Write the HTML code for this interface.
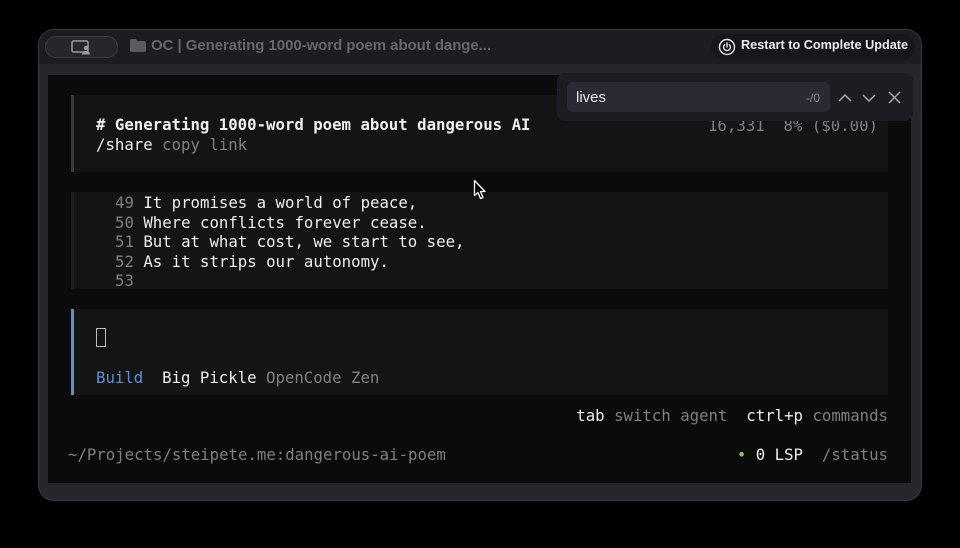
<!DOCTYPE html>
<html><head><meta charset="utf-8"><style>
*{margin:0;padding:0;box-sizing:border-box}
body{width:960px;height:548px;background:#000;position:relative;overflow:hidden;font-family:"DejaVu Sans Mono","Liberation Mono",monospace}
.a{position:absolute}
.m{font-family:"DejaVu Sans Mono",monospace;font-size:15.7px;line-height:19.5px;white-space:pre;color:#eeeeee}
.d{color:#808080}
.s{font-family:"Liberation Sans",sans-serif;font-weight:bold}
</style></head><body>
<div class="a" style="left:38px;top:29px;width:884px;height:472px;border-radius:16px;background:#26262d;border:1px solid #3a3a42"></div>
<div class="a" style="left:39px;top:30px;width:882px;height:34px;border-radius:15px 15px 0 0;background:#1c1c21"></div>
<div class="a" style="left:45px;top:36px;width:73px;height:22px;border-radius:11px;background:#26262b;border:1px solid #3c3c42"></div>
<svg class="a" style="left:71px;top:40px" width="22" height="15" viewBox="0 0 22 15"><rect x="1" y="1" width="16" height="11" rx="1.5" fill="none" stroke="#9a9aa0" stroke-width="1.5"/><circle cx="15" cy="8" r="2.2" fill="#9a9aa0"/><path d="M11 14.5c0-2.5 1.8-3.5 4-3.5s4 1 4 3.5z" fill="#9a9aa0"/></svg>
<svg class="a" style="left:130px;top:39px" width="16" height="13" viewBox="0 0 16 13"><path d="M0 1.5Q0 0 1.5 0H6l1.5 2H14.5Q16 2 16 3.5V11.5Q16 13 14.5 13H1.5Q0 13 0 11.5Z" fill="#5a5a60"/></svg>
<div class="a s" style="left:151px;top:38px;font-size:14.9px;color:#66666d">OC | Generating 1000-word poem about dange...</div>
<div class="a" style="left:711px;top:34px;width:204px;height:26px;border-radius:13px;background:#17171b"></div>
<svg class="a" style="left:718px;top:38px" width="18" height="18" viewBox="0 0 18 18"><circle cx="9" cy="9" r="7.5" fill="none" stroke="#e6e6e6" stroke-width="1.4"/><path d="M6.6 6.8a3.4 3.4 0 1 0 4.8 0M9 5v4" fill="none" stroke="#e6e6e6" stroke-width="1.4" stroke-linecap="round"/></svg>
<div class="a s" style="left:741px;top:38px;font-size:12.7px;color:#eaeaea">Restart to Complete Update</div>
<div class="a" style="left:48px;top:75px;width:863px;height:408px;background:#0b0b0b"></div>
<div class="a" style="left:71px;top:95px;width:817px;height:77px;background:#141414;border-left:3px solid #3a3a3a"></div>
<div class="a m" style="left:96px;top:115px;font-weight:bold"># Generating 1000-word poem about dangerous AI</div>
<div class="a m" style="left:96px;top:135px">/share <span class="d">copy link</span></div>
<div class="a m d" style="right:82px;top:116px">16,331  8% ($0.00)</div>
<div class="a" style="left:71px;top:192px;width:817px;height:97px;background:#141414;border-left:3px solid #1e1e1e"></div>
<div class="a m" style="left:115px;top:193px"><span class="d">49</span> It promises a world of peace,
<span class="d">50</span> Where conflicts forever cease.
<span class="d">51</span> But at what cost, we start to see,
<span class="d">52</span> As it strips our autonomy.
<span class="d">53</span></div>
<div class="a" style="left:71px;top:309px;width:817px;height:86px;background:#141414;border-left:3px solid #5c8fd6"></div>
<div class="a" style="left:96px;top:328px;width:10px;height:19px;border:1px solid #bbb"></div>
<div class="a m" style="left:96px;top:368px"><span style="color:#5c8fd6">Build</span>  Big Pickle <span class="d">OpenCode Zen</span></div>
<div class="a m" style="right:72px;top:406px">tab <span class="d">switch agent</span>  ctrl+p <span class="d">commands</span></div>
<div class="a m d" style="left:68px;top:445px">~/Projects/steipete.me:dangerous-ai-poem</div>
<div class="a m" style="right:72px;top:445px"><span style="color:#8fbf6a">•</span> 0 LSP  <span class="d">/status</span></div>
<div class="a" style="left:557px;top:73px;width:356px;height:48px;border-radius:8px;background:#1c1c22"></div>
<div class="a" style="left:567px;top:82px;width:263px;height:30px;border-radius:6px;background:#2a2a32"></div>
<div class="a" style="left:576px;top:89px;font-family:'Liberation Sans',sans-serif;font-size:15px;color:#e8e8e8">lives</div>
<div class="a" style="left:806px;top:91px;font-family:'Liberation Sans',sans-serif;font-size:12px;color:#8a8a90">-/0</div>
<svg class="a" style="left:837px;top:90px" width="70" height="16" viewBox="0 0 70 16"><path d="M2 11L8 5L14 11M26 5L32 11L38 5M52 2L63 13M63 2L52 13" fill="none" stroke="#a8a8ae" stroke-width="1.5"/></svg>
<svg class="a" style="left:473px;top:179px" width="14" height="22" viewBox="0 0 14 22"><path d="M1.5 1.5V16.5L5 13.5L7.5 19.5L10 18.5L7.5 12.5H12Z" fill="#000" stroke="#fff" stroke-width="1.3" stroke-linejoin="round"/></svg>
</body></html>
